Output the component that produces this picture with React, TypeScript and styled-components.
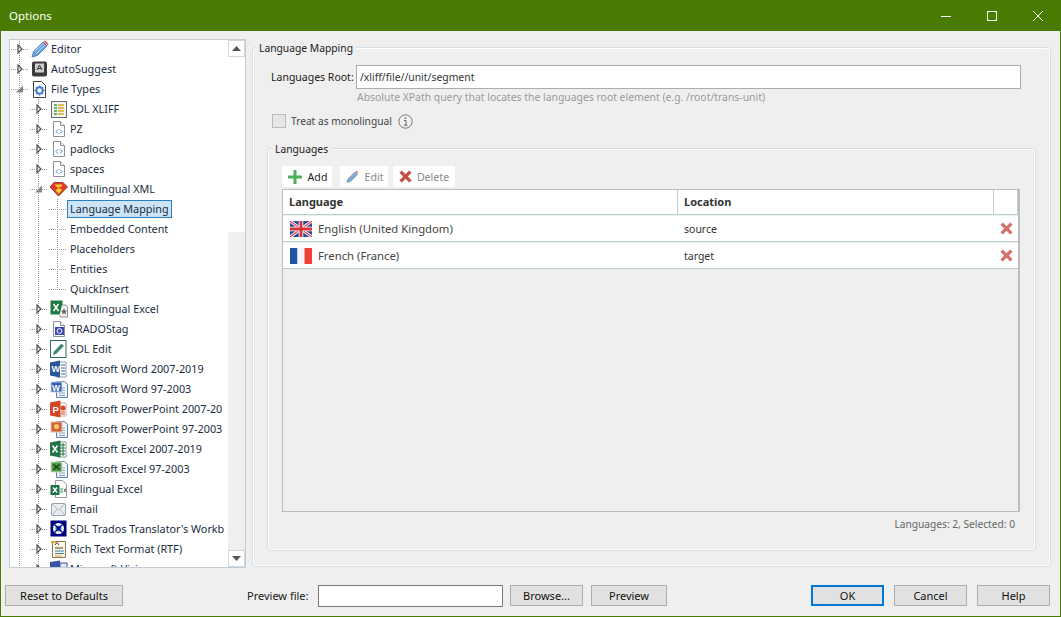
import React from "react";
import styled, { createGlobalStyle } from "styled-components";

const GlobalStyle = createGlobalStyle`
  html, body {
    margin: 0;
    padding: 0;
    background: #efefef;
  }
  * {
    box-sizing: border-box;
  }
`;

type IconName =
  | "pencil" | "keycap" | "gearDoc" | "xliff" | "xml" | "shield" | "excelStar" | "tag" | "sdlEdit"
  | "word" | "wordOld" | "ppt" | "pptOld" | "excel" | "excelOld" | "biExcel" | "mail" | "workbench" | "rtf" | "visio";

const Doc = ({ children }: { children?: React.ReactNode }) => (
  <>
    <path d="M3.5 1.5h7l4 4v11h-11z" fill="#fff" stroke="#8a929a" />
    <path d="M10.5 1.5v4h4" fill="#eef1f4" stroke="#8a929a" />
    {children}
  </>
);

const OldDoc = ({ children }: { children?: React.ReactNode }) => (
  <>
    <path d="M6.5 1.5h8l3 3v13h-11z" fill="#f4f7fb" stroke="#5b7fae" />
    <path d="M9 8h6M9 10.5h6M9 13h6M9 15.5h6" stroke="#7d9cc4" />
    {children}
  </>
);

const drawings: Record<IconName, React.ReactNode> = {
  pencil: (
    <>
      <path d="M1 17l1.5-5.5L12 2l4 4-9.5 9.5z" fill="#6ea2dc" stroke="#3a70b5" strokeWidth="0.8" />
      <path d="M3.5 11.5L12.5 3M5.500 13.500L14 5" stroke="#d6e6f8" strokeWidth="0.8" />
      <path d="M12.5 1.5L14 .5l3.5 3.5-1 1.5z" fill="#d9534f" />
    </>
  ),
  keycap: (
    <>
      <rect x="1" y="1.5" width="15" height="15" rx="2" fill="#3b3b3b" />
      <rect x="4" y="3.5" width="9" height="9" fill="#cfcfcf" />
      <path d="M6 10l2.5-5L11 10M7 8.500h3" fill="none" stroke="#333" />
    </>
  ),
  gearDoc: (
    <>
      <path d="M2.5 1.5h8l4 4v12h-12z" fill="#fff" stroke="#444" />
      <circle cx="8.5" cy="10.5" r="3.2" fill="none" stroke="#3f7fd0" strokeWidth="2" />
      <path d="M8.5 5.5v2M8.5 13.500v2M3.500 10.500h2M11.500 10.500h2M5 7l1.400 1.400M10.600 12.600L12 14M12 7l-1.400 1.400M6.400 12.600L5 14" stroke="#3f7fd0" strokeWidth="1.3" />
    </>
  ),
  xliff: (
    <>
      <rect x="1.5" y="1.5" width="15" height="16" fill="#f6f6f0" stroke="#5f6f6f" />
      <path d="M4 5h3M4 8h3M4 11h3M4 14h3" stroke="#2f9e44" strokeWidth="1.4" />
      <path d="M8 5h6M8 8h6M8 11h6M8 14h6" stroke="#d9a520" strokeWidth="1.4" />
    </>
  ),
  xml: (
    <Doc>
      <path d="M8 9.500L6 11.500l2 2M10 9.500l2 2-2 2" fill="none" stroke="#3f7fd0" />
    </Doc>
  ),
  shield: (
    <>
      <path d="M4 2.500h9l4.500 4.500L8.500 16 0 7z" fill="#e8362b" stroke="#6f2a1a" strokeWidth="0.8" />
      <path d="M4.500 4.500h8L11 7H8l4 3-3.500 4-3-4 3-1.500z" fill="#f6d32a" />
    </>
  ),
  excelStar: (
    <>
      <rect x="0.5" y="0.5" width="12" height="14" fill="#1f7a45" />
      <path d="M3.500 4l5 7M8.500 4l-5 7" stroke="#fff" strokeWidth="1.5" />
      <path d="M12 5h4l1.500 2v10h-7l-1-2" fill="#f4f4f4" stroke="#777" strokeWidth="0.8" />
      <path d="M14 8l1 2.500 2 .2-1.500 1.500.5 2.300-2-1.200-2 1.200.5-2.300L11 10.700l2-.2z" fill="#666" />
    </>
  ),
  tag: (
    <Doc>
      <rect x="5" y="7" width="9" height="8" fill="#3c46b5" />
      <circle cx="9.5" cy="11" r="2.4" fill="none" stroke="#fff" />
    </Doc>
  ),
  sdlEdit: (
    <>
      <rect x="0.5" y="0.5" width="15.5" height="17" fill="#fff" stroke="#2f6f55" />
      <path d="M3.500 14.500l.8-3L11.500 4l2 2-7.300 7.500z" fill="#3f8a6a" stroke="#2f6f55" strokeWidth="0.6" />
    </>
  ),
  word: (
    <>
      <path d="M7 2h9v15H7z" fill="#fff" stroke="#8d9ab3" />
      <path d="M11 5h4M11 8h4M11 11h4M11 14h4" stroke="#3a64a8" />
      <path d="M0 2.500L10 .5v17L0 15.500z" fill="#2a5699" />
      <text x="1.5" y="12" fontSize="9" fontWeight="700" fill="#fff" fontFamily="Liberation Sans, sans-serif">W</text>
    </>
  ),
  wordOld: (
    <OldDoc>
      <rect x="1" y="2" width="11" height="10" fill="#2f5fb0" stroke="#c5d4ea" />
      <text x="2" y="10.5" fontSize="8.5" fontWeight="700" fill="#fff" fontFamily="Liberation Sans, sans-serif">W</text>
    </OldDoc>
  ),
  ppt: (
    <>
      <path d="M8 3h8v13H8z" fill="#fff" stroke="#c9b0a6" />
      <path d="M11 12h4M11 14h4" stroke="#d24726" />
      <circle cx="13" cy="8" r="2.5" fill="#d24726" />
      <path d="M0 2.500L10.500 .5v17L0 15.500z" fill="#d24726" />
      <text x="2.5" y="12.5" fontSize="9.5" fontWeight="700" fill="#fff" fontFamily="Liberation Sans, sans-serif">P</text>
    </>
  ),
  pptOld: (
    <OldDoc>
      <rect x="1" y="2" width="11" height="10" fill="#d0603a" stroke="#e8c6a8" />
      <circle cx="6.5" cy="6.5" r="2.6" fill="#f2c76b" />
    </OldDoc>
  ),
  excel: (
    <>
      <path d="M8 2h8v15H8z" fill="#fff" stroke="#7fa58f" />
      <path d="M10 5h5M10 8h5M10 11h5M10 14h5M13 3v13" stroke="#217346" />
      <path d="M0 2.500L10.500 .5v17L0 15.500z" fill="#217346" />
      <path d="M2.500 5.500l5 7M7.500 5.500l-5 7" stroke="#fff" strokeWidth="1.6" />
    </>
  ),
  excelOld: (
    <OldDoc>
      <rect x="1" y="2" width="11" height="10" fill="#4f9a4a" stroke="#d2e2c8" />
      <path d="M3.500 4.500l6 5M9.500 4.500l-6 5" stroke="#15401c" strokeWidth="1.4" />
    </OldDoc>
  ),
  biExcel: (
    <>
      <path d="M5.500 .5h7l4 4v13h-11z" fill="#fff" stroke="#999" />
      <rect x="0.5" y="5" width="9" height="10" fill="#217346" />
      <path d="M3 7.500l4 5M7 7.500l-4 5" stroke="#fff" strokeWidth="1.3" />
      <rect x="10" y="8" width="3" height="5" fill="#9fd0b4" />
      <path d="M14 8.500l2 3.500M16 8.500l-2 3.500" stroke="#777" />
    </>
  ),
  mail: (
    <>
      <rect x="1.5" y="3.5" width="14" height="12" rx="1" fill="#e9edf2" stroke="#9aa3ad" />
      <path d="M2 4l6.500 6L15 4M2 15l5-5.500M15 15l-5-5.500" fill="none" stroke="#aab2bb" />
    </>
  ),
  workbench: (
    <>
      <rect x="0.5" y="0.5" width="16" height="16" fill="#00007e" />
      <circle cx="8.5" cy="8.5" r="5.5" fill="#fff" />
      <circle cx="8.5" cy="8.5" r="3" fill="#1f74c4" />
      <path d="M4.500 4.500l8 8M12.500 4.500l-8 8" stroke="#00007e" strokeWidth="1.3" />
    </>
  ),
  rtf: (
    <>
      <path d="M2.500 1.500h13v16h-13z" fill="#fdf6e3" stroke="#8a7a5a" />
      <path d="M1 1h5v2H1z" fill="#d9a441" />
      <path d="M5 5l2-2.500L9 5M5 8h8" fill="none" stroke="#444" />
      <path d="M5 11h9M5 13.500h9" stroke="#3a7ac0" />
      <path d="M5 16h7" stroke="#d9a441" />
    </>
  ),
  visio: (
    <>
      <path d="M0 2L10 .5v8H0z" fill="#3955a3" />
      <path d="M10 3h7v6h-7z" fill="#dfe6f4" stroke="#3955a3" />
    </>
  ),
};

function TreeIcon({ name }: { name: IconName }) {
  return (
    <IconBox viewBox="0 0 18 18" width="18" height="18">
      {drawings[name]}
    </IconBox>
  );
}

type RowData = {
  label: string;
  level: 0 | 1 | 2;
  icon?: IconName;
  open?: boolean;
  selected?: boolean;
  last?: boolean;
};

const rows: RowData[] = [
  { label: "Editor", level: 0, icon: "pencil" },
  { label: "AutoSuggest", level: 0, icon: "keycap" },
  { label: "File Types", level: 0, icon: "gearDoc", open: true },
  { label: "SDL XLIFF", level: 1, icon: "xliff" },
  { label: "PZ", level: 1, icon: "xml" },
  { label: "padlocks", level: 1, icon: "xml" },
  { label: "spaces", level: 1, icon: "xml" },
  { label: "Multilingual XML", level: 1, icon: "shield", open: true },
  { label: "Language Mapping", level: 2, selected: true },
  { label: "Embedded Content", level: 2 },
  { label: "Placeholders", level: 2 },
  { label: "Entities", level: 2 },
  { label: "QuickInsert", level: 2, last: true },
  { label: "Multilingual Excel", level: 1, icon: "excelStar" },
  { label: "TRADOStag", level: 1, icon: "tag" },
  { label: "SDL Edit", level: 1, icon: "sdlEdit" },
  { label: "Microsoft Word 2007-2019", level: 1, icon: "word" },
  { label: "Microsoft Word 97-2003", level: 1, icon: "wordOld" },
  { label: "Microsoft PowerPoint 2007-20", level: 1, icon: "ppt" },
  { label: "Microsoft PowerPoint 97-2003", level: 1, icon: "pptOld" },
  { label: "Microsoft Excel 2007-2019", level: 1, icon: "excel" },
  { label: "Microsoft Excel 97-2003", level: 1, icon: "excelOld" },
  { label: "Bilingual Excel", level: 1, icon: "biExcel" },
  { label: "Email", level: 1, icon: "mail" },
  { label: "SDL Trados Translator's Workb", level: 1, icon: "workbench" },
  { label: "Rich Text Format (RTF)", level: 1, icon: "rtf" },
  { label: "Microsoft Visio", level: 1, icon: "visio" },
];

function Expander({ open }: { open?: boolean }) {
  return (
    <svg width="9" height="10" viewBox="0 0 9 10">
      {open ? (
        <path d="M8 1.500v7H1z" fill="#858585" />
      ) : (
        <path d="M3 1l4 4-4 4z" fill="#ddd" stroke="#555" strokeWidth="1.2" />
      )}
    </svg>
  );
}

function TreeRow({ row, index }: { row: RowData; index: number }) {
  return (
    <Row>
      {row.level > 0 && <Guide />}
      {row.level > 1 && <Guide />}
      <Branch $first={index === 0} $last={row.last}>
        {row.level < 2 && <Expander open={row.open} />}
      </Branch>
      {row.icon && <TreeIcon name={row.icon} />}
      <Label $selected={row.selected} $plain={!row.icon}>
        {row.label}
      </Label>
    </Row>
  );
}

function CrossIcon({ faded }: { faded?: boolean }) {
  return (
    <svg width="13" height="13" viewBox="0 0 14 14">
      <path
        d="M3 .5L7 4.500 11 .5 13.500 3 9.500 7 13.500 11 11 13.500 7 9.500 3 13.500 .5 11 4.500 7 .5 3z"
        fill={faded ? "#d4706a" : "#bf5046"}
      />
    </svg>
  );
}

function UkFlag() {
  return (
    <svg width="22" height="16" viewBox="0 0 22 16">
      <rect width="22" height="16" fill="#2b4a9b" />
      <path d="M0 0l22 16M22 0L0 16" stroke="#fff" strokeWidth="3" />
      <path d="M0 0l22 16M22 0L0 16" stroke="#d8404a" strokeWidth="1.2" />
      <path d="M11 0v16M0 8h22" stroke="#fff" strokeWidth="4.5" />
      <path d="M11 0v16M0 8h22" stroke="#d8303a" strokeWidth="2.8" />
    </svg>
  );
}

function FrFlag() {
  return (
    <svg width="22" height="16" viewBox="0 0 22 16">
      <rect width="7.5" height="16" fill="#1f55a5" />
      <rect x="7.5" width="7" height="16" fill="#f4f6fb" />
      <rect x="14.5" width="7.5" height="16" fill="#ef4135" />
    </svg>
  );
}

const languages = [
  { name: "English (United Kingdom)", location: "source", flag: <UkFlag /> },
  { name: "French (France)", location: "target", flag: <FrFlag /> },
];

export default function App() {
  return (
    <Window>
      <GlobalStyle />
      <TitleBar>
        <Title>Options</Title>
        <WindowControls>
          <WindowButton>
            <svg width="10" height="10" viewBox="0 0 10 10"><path d="M0 5.500h10" stroke="#fff" /></svg>
          </WindowButton>
          <WindowButton>
            <svg width="10" height="10" viewBox="0 0 10 10"><rect x=".5" y=".5" width="9" height="9" fill="none" stroke="#fff" /></svg>
          </WindowButton>
          <WindowButton>
            <svg width="10" height="10" viewBox="0 0 10 10"><path d="M0 0l10 10M10 0L0 10" stroke="#fff" /></svg>
          </WindowButton>
        </WindowControls>
      </TitleBar>

      <Content>
        <Tree>
          <TreeList>
            {rows.map((row, i) => (
              <TreeRow key={row.label} row={row} index={i} />
            ))}
          </TreeList>
          <ScrollBar>
            <ScrollButton>
              <svg width="9" height="5" viewBox="0 0 9 5"><path d="M4.500 0L9 5H0z" fill="#555" /></svg>
            </ScrollButton>
            <Thumb />
            <Track />
            <ScrollButton>
              <svg width="9" height="5" viewBox="0 0 9 5"><path d="M0 0h9L4.500 5z" fill="#555" /></svg>
            </ScrollButton>
          </ScrollBar>
        </Tree>

        <MainGroup>
          <GroupTitle $offset={-15}>Language Mapping</GroupTitle>
          <FieldRow>
            <FieldLabel>Languages Root:</FieldLabel>
            <RootInput readOnly value="/xliff/file//unit/segment" />
          </FieldRow>
          <Hint>Absolute XPath query that locates the languages root element (e.g. /root/trans-unit)</Hint>
          <CheckRow>
            <CheckBox />
            <CheckLabel>Treat as monolingual</CheckLabel>
            <svg width="15" height="15" viewBox="0 0 15 15">
              <circle cx="7.5" cy="7.5" r="6.7" fill="none" stroke="#777" />
              <path d="M6 6.500h2v4.500M5.800 11.200h3.600" fill="none" stroke="#666" />
              <rect x="6.6" y="3.3" width="1.5" height="1.5" fill="#666" />
            </svg>
          </CheckRow>

          <LanguagesGroup>
            <GroupTitle $offset={-10}>Languages</GroupTitle>
            <Toolbar>
              <ToolButton $width={50} $after={3}>
                <svg width="16" height="16" viewBox="0 0 16 16">
                  <path d="M8 1v14M1 8h14" stroke="#4fae5a" strokeWidth="3" />
                </svg>
                Add
              </ToolButton>
              <ToolButton $width={48} $muted>
                <svg width="15" height="15" viewBox="0 0 15 15">
                  <path d="M2 13.500l1-3.500 7-7 2.500 2.500-7 7z" fill="#8aa9d0" stroke="#6a8db8" strokeWidth="0.7" />
                  <path d="M10.500 2.500l1-1 2 2-1 1z" fill="#c97b78" />
                </svg>
                Edit
              </ToolButton>
              <ToolButton $width={62} $muted>
                <CrossIcon />
                Delete
              </ToolButton>
            </Toolbar>
            <Table>
              <HeaderRow>
                <HeaderCell>Language</HeaderCell>
                <HeaderCell>Location</HeaderCell>
                <HeaderCell />
              </HeaderRow>
              {languages.map((lang) => (
                <DataRow key={lang.name}>
                  <LanguageCell>
                    {lang.flag}
                    {lang.name}
                  </LanguageCell>
                  <LocationCell>{lang.location}</LocationCell>
                  <ActionCell>
                    <CrossIcon faded />
                  </ActionCell>
                </DataRow>
              ))}
            </Table>
            <Status>Languages: 2, Selected: 0</Status>
          </LanguagesGroup>
        </MainGroup>
      </Content>

      <Footer>
        <Button $width={118}>Reset to Defaults</Button>
        <PreviewArea>
          <PreviewLabel>Preview file:</PreviewLabel>
          <PreviewInput readOnly />
          <Button $width={73}>Browse...</Button>
          <Button $width={76}>Preview</Button>
        </PreviewArea>
        <DialogButtons>
          <Button $width={73} $primary>OK</Button>
          <Button $width={73}>Cancel</Button>
          <Button $width={73}>Help</Button>
        </DialogButtons>
      </Footer>
    </Window>
  );
}

const Window = styled.div`
  width: 1061px;
  height: 617px;
  display: flex;
  flex-direction: column;
  overflow: hidden;
  background: #efefef;
  border: 1px solid #4a7c03;
  border-top: none;
  font-family: "Noto Sans", "Liberation Sans", sans-serif;
  font-size: 11px;
  color: #1a1a1a;
`;

const TitleBar = styled.div`
  height: 31px;
  flex: none;
  margin: 0 -1px;
  background: #4a7c03;
  display: flex;
  align-items: center;
  justify-content: space-between;
  padding-left: 9px;
`;

const Title = styled.span`
  color: #fff;
  font-size: 11.5px;
`;

const WindowControls = styled.div`
  display: flex;
`;

const WindowButton = styled.div`
  width: 46px;
  height: 31px;
  display: flex;
  align-items: center;
  justify-content: center;
`;

const Content = styled.div`
  display: flex;
  gap: 7px;
  padding: 8px 10px 0 8px;
`;

const Tree = styled.div`
  width: 237px;
  height: 529px;
  flex: none;
  display: flex;
  background: #fff;
  border: 1px solid #c3ccd4;
`;

const TreeList = styled.div`
  flex: 1;
  min-width: 0;
  overflow: hidden;
  font-size: 10.8px;
  & > div:first-child {
    margin-top: -1px;
  }
`;

const Row = styled.div`
  height: 20px;
  display: flex;
  align-items: center;
  white-space: nowrap;
`;

const Guide = styled.span`
  width: 19px;
  height: 20px;
  flex: none;
  background: linear-gradient(#9a9a9a 50%, transparent 50%) 9px 0 / 1px 2px repeat-y;
`;

const Branch = styled.span<{ $first?: boolean; $last?: boolean }>`
  width: 19px;
  height: 20px;
  flex: none;
  display: flex;
  align-items: center;
  justify-content: center;
  background-image:
    linear-gradient(90deg, #9a9a9a 50%, transparent 50%),
    linear-gradient(#9a9a9a 50%, transparent 50%);
  background-size: 2px 1px, 1px 2px;
  background-position: 9px 10px, 9px ${(p) => (p.$first ? "10px" : "0")};
  background-repeat: repeat-x, repeat-y;
  clip-path: ${(p) => (p.$last ? "polygon(0 0, 100% 0, 100% 55%, 0 55%)" : "none")};
`;

const IconBox = styled.svg`
  flex: none;
  margin-left: 2px;
`;

const Label = styled.span<{ $selected?: boolean; $plain?: boolean }>`
  height: 18px;
  line-height: 16px;
  padding: 0 2px 0 ${(p) => (p.$plain ? "2px" : "1px")};
  border: 1px solid ${(p) => (p.$selected ? "#2a80c4" : "transparent")};
  background: ${(p) => (p.$selected ? "#cce4f7" : "transparent")};
  color: #1c2c40;
`;

const ScrollBar = styled.div`
  width: 17px;
  flex: none;
  display: flex;
  flex-direction: column;
  background: #efefef;
`;

const ScrollButton = styled.div`
  height: 17px;
  flex: none;
  display: flex;
  align-items: center;
  justify-content: center;
  background: #fff;
  border: 1px solid #cfd6dc;
`;

const Thumb = styled.div`
  height: 175px;
  flex: none;
  background: #fff;
`;

const Track = styled.div`
  flex: 1;
`;

const MainGroup = styled.fieldset`
  flex: 1;
  min-width: 0;
  height: 526px;
  margin: 1px 0 0;
  padding: 9px 28px 0 17px;
  border: 1px solid #fff;
  border-radius: 3px;
  box-shadow: 0 0 0 1px #d8e0e6;
`;

const GroupTitle = styled.legend<{ $offset: number }>`
  padding: 0 3px;
  margin-left: ${(p) => p.$offset}px;
  line-height: 16px;
  font-size: 10.3px;
  background: #efefef;
  color: #222;
`;

const FieldRow = styled.div`
  display: flex;
  align-items: center;
  gap: 4px;
`;

const FieldLabel = styled.span`
  width: 81px;
  flex: none;
  white-space: nowrap;
  font-size: 10.5px;
`;

const RootInput = styled.input`
  flex: 1;
  min-width: 0;
  height: 24px;
  padding: 0 3px;
  border: 1px solid #adadad;
  background: #fff;
  font-family: inherit;
  font-size: 10.4px;
  color: #333;
  outline: none;
`;

const Hint = styled.div`
  margin-left: 86px;
  height: 16px;
  line-height: 16px;
  font-size: 10.4px;
  color: #9a9a9a;
`;

const CheckRow = styled.div`
  display: flex;
  align-items: center;
  height: 16px;
  margin-top: 8px;
  margin-left: 1px;
`;

const CheckBox = styled.span`
  width: 14px;
  height: 14px;
  background: #e6e6e6;
  border: 1px solid #bbb;
`;

const CheckLabel = styled.span`
  margin: 0 6px 0 5px;
  font-size: 10.2px;
  color: #444;
`;

const LanguagesGroup = styled.fieldset`
  margin: 12px -14px 0 -3px;
  padding: 9px 14px 0 13px;
  height: 409px;
  border: 1px solid #fff;
  border-radius: 3px;
  box-shadow: 0 0 0 1px #d8e0e6;
`;

const Toolbar = styled.div`
  display: flex;
  gap: 5px;
  height: 21px;
`;

const ToolButton = styled.div<{ $width: number; $muted?: boolean; $after?: number }>`
  width: ${(p) => p.$width}px;
  margin-right: ${(p) => p.$after ?? 0}px;
  display: flex;
  align-items: center;
  justify-content: center;
  gap: 5px;
  font-size: 10.6px;
  background: #fff;
  color: ${(p) => (p.$muted ? "#888" : "#222")};
`;

const Table = styled.div`
  height: 323px;
  margin-top: 2px;
  background: #efefef;
  border: 1px solid #bdbdbd;
  border-right-width: 2px;
`;

const columns = "395px 316px 1fr";

const HeaderRow = styled.div`
  display: grid;
  grid-template-columns: ${columns};
  height: 25px;
  background: #fff;
  border-bottom: 1px solid #bccdd3;
`;

const HeaderCell = styled.div`
  padding-left: 6px;
  line-height: 24px;
  font-weight: 700;
  color: #333;
  border-right: 1px solid #bccdd3;
`;

const DataRow = styled.div`
  display: grid;
  grid-template-columns: ${columns};
  height: 26px;
  margin-top: 1px;
  background: #fff;
  border-bottom: 1px solid #bccdd3;
  align-items: center;
`;

const LanguageCell = styled.div`
  display: flex;
  align-items: center;
  gap: 6px;
  padding-left: 7px;
  font-size: 11.3px;
  color: #444;
`;

const LocationCell = styled.div`
  padding-left: 6px;
  font-size: 10.5px;
  color: #333;
`;

const ActionCell = styled.div`
  display: flex;
  justify-content: center;
  padding-left: 1px;
`;

const Status = styled.div`
  margin-top: 4px;
  padding-right: 5px;
  text-align: right;
  line-height: 16px;
  font-size: 10.2px;
  color: #666;
`;

const Footer = styled.div`
  height: 22px;
  margin-top: 17px;
  padding: 0 10px 0 4px;
  display: flex;
  align-items: flex-start;
`;

const Button = styled.div<{ $width: number; $primary?: boolean }>`
  width: ${(p) => p.$width}px;
  height: 21px;
  flex: none;
  display: flex;
  align-items: center;
  justify-content: center;
  background: #e1e1e1;
  border: ${(p) => (p.$primary ? "2px solid #0078d7" : "1px solid #adadad")};
  color: #111;
`;

const PreviewArea = styled.div`
  display: flex;
  align-items: flex-start;
  gap: 8px;
  margin-left: 124px;
`;

const PreviewLabel = styled.span`
  width: 63px;
  line-height: 21px;
`;

const PreviewInput = styled.input`
  width: 185px;
  height: 22px;
  margin-right: -1px;
  border: 1px solid #7a7a7a;
  background: #fff;
  outline: none;
`;

const DialogButtons = styled.div`
  display: flex;
  gap: 10px;
  margin-left: auto;
`;
